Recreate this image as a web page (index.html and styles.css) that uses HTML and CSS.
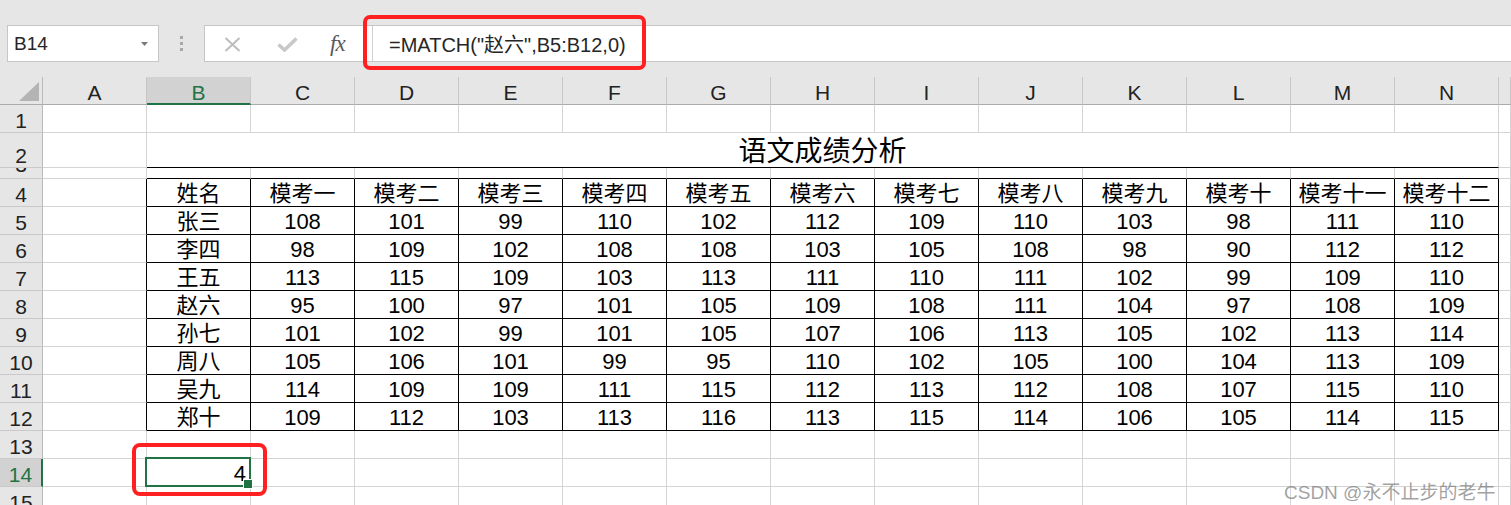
FILE: index.html
```html
<!DOCTYPE html>
<html lang="zh">
<head>
    <meta charset="UTF-8">
    <meta name="viewport" content="width=device-width, initial-scale=1.0">
    <title>语文成绩分析 - MATCH</title>
    <link rel="stylesheet" href="styles.css">
</head>
<body>
    <!-- 编辑栏 -->
    <div class="formula-bar">
        <div class="name-box">
            <span>B14</span>
            <svg class="drop" width="7" height="4" viewBox="0 0 7 4"><path d="M0 0H7L3.5 4Z" fill="#7a7a7a"/></svg>
        </div>
        <div class="dots"><i></i><i></i><i></i></div>
        <div class="fx-box">
            <div class="fx-buttons">
                <svg class="ic-x" width="17" height="15" viewBox="0 0 17 15"><path d="M1.5 1L15.5 14M15.5 1L1.5 14" stroke="#bdbdbd" stroke-width="2" fill="none"/></svg>
                <svg class="ic-ok" width="21" height="15" viewBox="0 0 21 15"><path d="M1.5 7.5L7.5 13L19.5 1.5" stroke="#c8c8c8" stroke-width="3.6" fill="none"/></svg>
                <span class="ic-fx">fx</span>
            </div>
            <div class="formula">=MATCH("赵六",B5:B12,0)</div>
        </div>
    </div>

    <!-- 工作表 -->
    <div class="sheet">
        <div class="corner"><svg width="20" height="19" viewBox="0 0 20 19"><path d="M0 19L20 0V19Z" fill="#b4b4b4"/></svg></div>
        <div class="ch">A</div><div class="ch on">B</div><div class="ch">C</div><div class="ch">D</div><div class="ch">E</div><div class="ch">F</div><div class="ch">G</div><div class="ch">H</div><div class="ch">I</div><div class="ch">J</div><div class="ch">K</div><div class="ch">L</div><div class="ch">M</div><div class="ch">N</div><div class="ch"></div>

        <div class="rh">1</div>
        <div class="c"></div><div class="c"></div><div class="c"></div><div class="c"></div><div class="c"></div><div class="c"></div><div class="c"></div><div class="c"></div><div class="c"></div><div class="c"></div><div class="c"></div><div class="c"></div><div class="c"></div><div class="c"></div><div class="c"></div>

        <div class="rh">2</div>
        <div class="c"></div><div class="c title">语文成绩分析</div><div class="c"></div>

        <div class="rh r3">3</div>
        <div class="c"></div><div class="c tt"></div><div class="c tt"></div><div class="c tt"></div><div class="c tt"></div><div class="c tt"></div><div class="c tt"></div><div class="c tt"></div><div class="c tt"></div><div class="c tt"></div><div class="c tt"></div><div class="c tt"></div><div class="c tt"></div><div class="c tt"></div><div class="c"></div>

        <div class="rh">4</div>
        <div class="c tl"></div><div class="c t">姓名</div><div class="c t">模考一</div><div class="c t">模考二</div><div class="c t">模考三</div><div class="c t">模考四</div><div class="c t">模考五</div><div class="c t">模考六</div><div class="c t">模考七</div><div class="c t">模考八</div><div class="c t">模考九</div><div class="c t">模考十</div><div class="c t">模考十一</div><div class="c t">模考十二</div><div class="c"></div>

        <div class="rh">5</div>
        <div class="c tl"></div><div class="c t">张三</div><div class="c t">108</div><div class="c t">101</div><div class="c t">99</div><div class="c t">110</div><div class="c t">102</div><div class="c t">112</div><div class="c t">109</div><div class="c t">110</div><div class="c t">103</div><div class="c t">98</div><div class="c t">111</div><div class="c t">110</div><div class="c"></div>

        <div class="rh">6</div>
        <div class="c tl"></div><div class="c t">李四</div><div class="c t">98</div><div class="c t">109</div><div class="c t">102</div><div class="c t">108</div><div class="c t">108</div><div class="c t">103</div><div class="c t">105</div><div class="c t">108</div><div class="c t">98</div><div class="c t">90</div><div class="c t">112</div><div class="c t">112</div><div class="c"></div>

        <div class="rh">7</div>
        <div class="c tl"></div><div class="c t">王五</div><div class="c t">113</div><div class="c t">115</div><div class="c t">109</div><div class="c t">103</div><div class="c t">113</div><div class="c t">111</div><div class="c t">110</div><div class="c t">111</div><div class="c t">102</div><div class="c t">99</div><div class="c t">109</div><div class="c t">110</div><div class="c"></div>

        <div class="rh">8</div>
        <div class="c tl"></div><div class="c t">赵六</div><div class="c t">95</div><div class="c t">100</div><div class="c t">97</div><div class="c t">101</div><div class="c t">105</div><div class="c t">109</div><div class="c t">108</div><div class="c t">111</div><div class="c t">104</div><div class="c t">97</div><div class="c t">108</div><div class="c t">109</div><div class="c"></div>

        <div class="rh">9</div>
        <div class="c tl"></div><div class="c t">孙七</div><div class="c t">101</div><div class="c t">102</div><div class="c t">99</div><div class="c t">101</div><div class="c t">105</div><div class="c t">107</div><div class="c t">106</div><div class="c t">113</div><div class="c t">105</div><div class="c t">102</div><div class="c t">113</div><div class="c t">114</div><div class="c"></div>

        <div class="rh">10</div>
        <div class="c tl"></div><div class="c t">周八</div><div class="c t">105</div><div class="c t">106</div><div class="c t">101</div><div class="c t">99</div><div class="c t">95</div><div class="c t">110</div><div class="c t">102</div><div class="c t">105</div><div class="c t">100</div><div class="c t">104</div><div class="c t">113</div><div class="c t">109</div><div class="c"></div>

        <div class="rh">11</div>
        <div class="c tl"></div><div class="c t">吴九</div><div class="c t">114</div><div class="c t">109</div><div class="c t">109</div><div class="c t">111</div><div class="c t">115</div><div class="c t">112</div><div class="c t">113</div><div class="c t">112</div><div class="c t">108</div><div class="c t">107</div><div class="c t">115</div><div class="c t">110</div><div class="c"></div>

        <div class="rh">12</div>
        <div class="c tl"></div><div class="c t">郑十</div><div class="c t">109</div><div class="c t">112</div><div class="c t">103</div><div class="c t">113</div><div class="c t">116</div><div class="c t">113</div><div class="c t">115</div><div class="c t">114</div><div class="c t">106</div><div class="c t">105</div><div class="c t">114</div><div class="c t">115</div><div class="c"></div>

        <div class="rh">13</div>
        <div class="c"></div><div class="c"></div><div class="c"></div><div class="c"></div><div class="c"></div><div class="c"></div><div class="c"></div><div class="c"></div><div class="c"></div><div class="c"></div><div class="c"></div><div class="c"></div><div class="c"></div><div class="c"></div><div class="c"></div>

        <div class="rh on">14</div>
        <div class="c"></div><div class="c sel">4</div><div class="c"></div><div class="c"></div><div class="c"></div><div class="c"></div><div class="c"></div><div class="c"></div><div class="c"></div><div class="c"></div><div class="c"></div><div class="c"></div><div class="c"></div><div class="c"></div><div class="c"></div>

        <div class="rh">15</div>
        <div class="c"></div><div class="c"></div><div class="c"></div><div class="c"></div><div class="c"></div><div class="c"></div><div class="c"></div><div class="c"></div><div class="c"></div><div class="c"></div><div class="c"></div><div class="c"></div><div class="c"></div><div class="c"></div><div class="c"></div>
    </div>

    <!-- 标注框 -->
    <div class="mark mark-formula"></div>
    <div class="mark mark-cell"></div>

    <div class="watermark">CSDN @永不止步的老牛</div>
</body>
</html>
```

FILE: styles.css
```css
* {
    margin: 0;
    padding: 0;
    box-sizing: border-box;
}

body {
    width: 1511px;
    height: 505px;
    overflow: hidden;
    position: relative;
    background: #fff;
    font-family: "Liberation Sans", "Noto Sans CJK SC", sans-serif;
    color: #000;
}

/* 编辑栏 */
.formula-bar {
    height: 77px;
    background: #e6e6e6;
    display: flex;
    align-items: flex-start;
    padding: 25px 0 0 7px;
}

.name-box {
    width: 152px;
    height: 37px;
    background: #fff;
    border: 1px solid #c6c6c6;
    display: flex;
    align-items: center;
    justify-content: space-between;
    padding: 0 10px 0 6px;
    font-size: 19px;
    color: #262626;
}

.drop {
    margin-top: 1px;
}

.dots {
    width: 45px;
    height: 37px;
    display: flex;
    flex-direction: column;
    align-items: center;
    justify-content: center;
    gap: 3px;
}

.dots i {
    width: 3px;
    height: 3px;
    background: #a8a8a8;
}

.fx-box {
    flex: 1;
    height: 37px;
    display: flex;
    background: #fff;
    border: 1px solid #c6c6c6;
    border-right: none;
}

.fx-buttons {
    width: 167px;
    display: flex;
    align-items: center;
}

.ic-x {
    margin-left: 19px;
    margin-top: 2px;
}

.ic-ok {
    margin-left: 36px;
    margin-top: 2px;
}

.ic-fx {
    margin-left: 32px;
    font-family: "Liberation Serif", serif;
    font-style: italic;
    font-size: 23px;
    color: #595959;
    letter-spacing: -1px;
}

.formula {
    flex: 1;
    border-left: 1px solid #d0d0d0;
    padding-left: 16px;
    display: flex;
    align-items: center;
    font-size: 20px;
    color: #262626;
}

/* 工作表网格 */
.sheet {
    display: grid;
    grid-template-columns: 43px repeat(14, 104px) 1fr;
    grid-template-rows: 28px 28px 35px 11px repeat(12, 28px);
}

.sheet > div {
    border-right: 1px solid #d4d4d4;
    border-bottom: 1px solid #d4d4d4;
    display: flex;
    align-items: flex-end;
    justify-content: center;
    overflow: hidden;
    white-space: nowrap;
    line-height: 1;
}

.corner {
    background: #e6e6e6;
    justify-content: flex-end !important;
    padding: 0 3px 3px 0;
    border-right-color: #b9b9b9 !important;
    border-bottom-color: #ababab !important;
}

.ch {
    background: #e6e6e6;
    font-size: 21px;
    color: #222;
    padding-bottom: 1px;
    border-right-color: #c6c6c6 !important;
    border-bottom-color: #ababab !important;
}

.ch.on {
    background: #d2d2d2;
    color: #217346;
    border-bottom: 2px solid #217346 !important;
    padding-bottom: 0;
}

.rh {
    background: #e6e6e6;
    font-size: 21px;
    color: #222;
    padding-bottom: 1px;
    border-right-color: #b9b9b9 !important;
    border-bottom-color: #c9c9c9 !important;
}

/* 第3行很矮，只露出数字下半部分 */
.rh.r3 {
    padding-bottom: 3px;
}

.rh.on {
    background: #d2d2d2;
    color: #217346;
    border-right: 2px solid #217346 !important;
}

.c {
    font-size: 22px;
    padding-bottom: 1px;
}

/* 表格边框 */
.title {
    grid-column: span 13;
    font-size: 28px;
    border-bottom-color: #000 !important;
}

.tt {
    border-bottom-color: #000 !important;
}

.tl {
    border-right-color: #000 !important;
}

.t {
    border-right-color: #000 !important;
    border-bottom-color: #000 !important;
}

/* 选中单元格 */
.sel {
    position: relative;
    overflow: visible !important;
    justify-content: flex-end !important;
    padding-right: 4px;
}

.sel::before {
    content: '';
    position: absolute;
    top: -2px;
    left: -2px;
    right: -1px;
    bottom: -1px;
    border: 2px solid #217346;
}

.sel::after {
    content: '';
    position: absolute;
    right: -3px;
    bottom: -3px;
    width: 8px;
    height: 8px;
    background: #217346;
    border: 1px solid #fff;
}

/* 红色标注框 */
.mark {
    position: absolute;
    border: 4px solid #ff2121;
    border-radius: 7px;
}

.mark-formula {
    left: 363px;
    top: 15px;
    width: 283px;
    height: 55px;
}

.mark-cell {
    left: 132px;
    top: 443px;
    width: 135px;
    height: 53px;
    border-radius: 8px;
}

.watermark {
    position: absolute;
    left: 1284px;
    top: 477px;
    font-size: 19px;
    color: rgba(120, 120, 120, 0.7);
    white-space: nowrap;
}
```
